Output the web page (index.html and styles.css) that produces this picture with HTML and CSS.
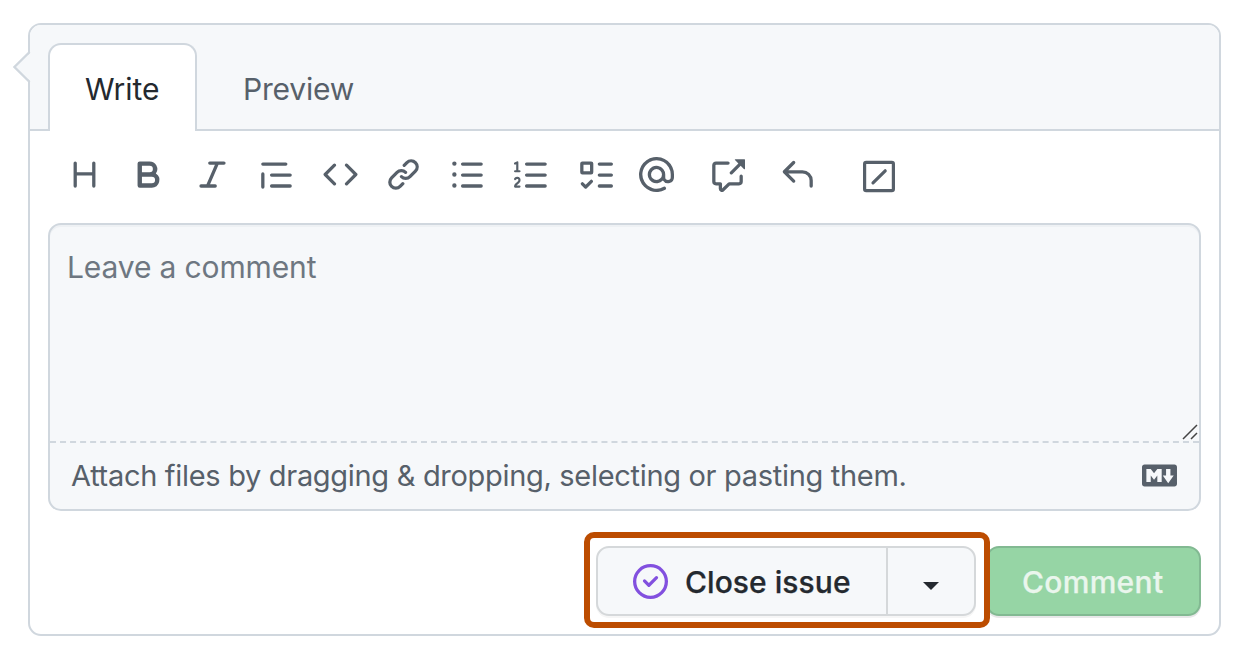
FILE: index.html
```html
<!DOCTYPE html>
<html lang="en">
<head>
<meta charset="utf-8">
<title>Comment</title>
<link rel="stylesheet" href="styles.css">
</head>
<body>
<main class="card">
  <svg class="pointer" viewBox="0 0 18 32"><path class="pointer-fill" d="M18 1 2 16 18 31Z"/><path class="pointer-line" d="M16.6 1 1.4 16 16.6 31"/></svg>
  <nav class="tabs">
    <button class="tab tab-active"><span class="t-write">Write</span></button>
    <button class="tab"><span class="t-preview">Preview</span></button>
  </nav>
  <div class="toolbar">
    <svg class="icon" viewBox="0 0 16 16"><path d="M3.75 2a.75.75 0 0 1 .75.75V7h7V2.75a.75.75 0 0 1 1.5 0v10.5a.75.75 0 0 1-1.5 0V8.5h-7v4.75a.75.75 0 0 1-1.5 0V2.75A.75.75 0 0 1 3.75 2Z"/></svg>
    <svg class="icon" viewBox="0 0 16 16"><path d="M4 2h4.5a3.501 3.501 0 0 1 2.852 5.53A3.499 3.499 0 0 1 9.5 14H4a1 1 0 0 1-1-1V3a1 1 0 0 1 1-1Zm1 7v3h4.5a1.5 1.5 0 0 0 0-3Zm3.5-2a1.5 1.5 0 0 0 0-3H5v3Z"/></svg>
    <svg class="icon" viewBox="0 0 16 16"><path d="M6 2.75A.75.75 0 0 1 6.75 2h6.5a.75.75 0 0 1 0 1.5h-2.505l-3.858 9H9.25a.75.75 0 0 1 0 1.5h-6.5a.75.75 0 0 1 0-1.5h2.505l3.858-9H6.75A.75.75 0 0 1 6 2.75Z"/></svg>
    <svg class="icon" viewBox="0 0 16 16"><path d="M1.75 2.5h10.5a.75.75 0 0 1 0 1.5H1.75a.75.75 0 0 1 0-1.5Zm4 5h8.5a.75.75 0 0 1 0 1.5h-8.5a.75.75 0 0 1 0-1.5Zm0 5h8.5a.75.75 0 0 1 0 1.5h-8.5a.75.75 0 0 1 0-1.5ZM2.5 7.75v6a.75.75 0 0 1-1.5 0v-6a.75.75 0 0 1 1.5 0Z"/></svg>
    <svg class="icon" viewBox="0 0 16 16"><path d="m11.28 3.22 4.25 4.25a.75.75 0 0 1 0 1.06l-4.25 4.25a.749.749 0 0 1-1.275-.326.749.749 0 0 1 .215-.734L13.94 8l-3.72-3.72a.749.749 0 0 1 .326-1.275.749.749 0 0 1 .734.215Zm-6.56 0a.751.751 0 0 1 1.042.018.751.751 0 0 1 .018 1.042L2.06 8l3.72 3.72a.749.749 0 0 1-.326 1.275.749.749 0 0 1-.734-.215L.47 8.53a.75.75 0 0 1 0-1.06Z"/></svg>
    <svg class="icon" viewBox="0 0 16 16"><path d="m7.775 3.275 1.25-1.25a3.5 3.5 0 1 1 4.95 4.95l-2.5 2.5a3.5 3.5 0 0 1-4.95 0 .751.751 0 0 1 .018-1.042.751.751 0 0 1 1.042-.018 1.998 1.998 0 0 0 2.83 0l2.5-2.5a2.002 2.002 0 0 0-2.83-2.83l-1.25 1.25a.751.751 0 0 1-1.042-.018.751.751 0 0 1-.018-1.042Zm-4.69 9.64a1.998 1.998 0 0 0 2.83 0l1.25-1.25a.751.751 0 0 1 1.042.018.751.751 0 0 1 .018 1.042l-1.25 1.25a3.5 3.5 0 1 1-4.95-4.95l2.5-2.5a3.5 3.5 0 0 1 4.95 0 .751.751 0 0 1-.018 1.042.751.751 0 0 1-1.042.018 1.998 1.998 0 0 0-2.83 0l-2.5 2.5a1.998 1.998 0 0 0 0 2.83Z"/></svg>
    <svg class="icon" viewBox="0 0 16 16"><path d="M5.75 2.5h8.5a.75.75 0 0 1 0 1.5h-8.5a.75.75 0 0 1 0-1.5Zm0 5h8.5a.75.75 0 0 1 0 1.5h-8.5a.75.75 0 0 1 0-1.5Zm0 5h8.5a.75.75 0 0 1 0 1.5h-8.5a.75.75 0 0 1 0-1.5ZM2 14a1 1 0 1 1 0-2 1 1 0 0 1 0 2Zm1-6a1 1 0 1 1-2 0 1 1 0 0 1 2 0ZM2 4a1 1 0 1 1 0-2 1 1 0 0 1 0 2Z"/></svg>
    <svg class="icon" viewBox="0 0 16 16"><path d="M5.75 2.5h8.5a.75.75 0 0 1 0 1.5h-8.5a.75.75 0 0 1 0-1.5Zm0 5h8.5a.75.75 0 0 1 0 1.5h-8.5a.75.75 0 0 1 0-1.5Zm0 5h8.5a.75.75 0 0 1 0 1.5h-8.5a.75.75 0 0 1 0-1.5ZM.924 10.32a.5.5 0 0 1-.851-.525l.01-.018c.097-.144.215-.273.348-.384.228-.19.588-.392 1.068-.392.468 0 .858.181 1.126.484.259.294.377.673.377 1.038 0 .987-.686 1.495-1.156 1.845l-.047.035c-.303.225-.522.4-.654.597h1.357a.5.5 0 0 1 0 1H.5a.5.5 0 0 1-.5-.5c0-1.005.692-1.52 1.167-1.875l.035-.025c.531-.396.8-.625.8-1.078a.57.57 0 0 0-.128-.376C1.806 10.068 1.695 10 1.5 10a.658.658 0 0 0-.429.163.835.835 0 0 0-.144.153ZM2.003 2.5V6h.503a.5.5 0 0 1 0 1H.5a.5.5 0 0 1 0-1h.503V3.308l-.28.14a.5.5 0 0 1-.446-.895l1.003-.5a.5.5 0 0 1 .723.447Z"/></svg>
    <svg class="icon" viewBox="0 0 16 16"><path d="M2 2h4a1 1 0 0 1 1 1v4a1 1 0 0 1-1 1H2a1 1 0 0 1-1-1V3a1 1 0 0 1 1-1Zm4.655 8.595a.75.75 0 0 1 0 1.06L4.03 14.28a.75.75 0 0 1-1.06 0l-1.5-1.5a.749.749 0 0 1 .326-1.275.749.749 0 0 1 .734.215l.97.97 2.095-2.095a.75.75 0 0 1 1.06 0ZM9.75 2.5h5.5a.75.75 0 0 1 0 1.5h-5.5a.75.75 0 0 1 0-1.5Zm0 5h5.5a.75.75 0 0 1 0 1.5h-5.5a.75.75 0 0 1 0-1.5Zm0 5h5.5a.75.75 0 0 1 0 1.5h-5.5a.75.75 0 0 1 0-1.5Zm-7.25-9v3h3v-3Z"/></svg>
    <svg class="icon" viewBox="0 0 16 16"><path d="M4.75 2.37a6.501 6.501 0 0 0 6.5 11.26.75.75 0 0 1 .75 1.298A8 8 0 1 1 16 8v1.25a2.75 2.75 0 0 1-5.072 1.475 3.999 3.999 0 0 1-6.65-4.19A4 4 0 0 1 12 8v1.25a1.25 1.25 0 0 0 2.5 0V7.867a6.5 6.5 0 0 0-9.75-5.496ZM10.5 8a2.5 2.5 0 1 0-5 0 2.5 2.5 0 0 0 5 0Z"/></svg>
    <svg class="icon" viewBox="0 0 16 16"><path d="M2.75 3.5a.25.25 0 0 0-.25.25v7.5c0 .138.112.25.25.25h2a.75.75 0 0 1 .75.75v2.19l2.72-2.72a.749.749 0 0 1 .53-.22h4.5a.25.25 0 0 0 .25-.25v-2.5a.75.75 0 0 1 1.5 0v2.5A1.75 1.75 0 0 1 13.25 13H9.06l-2.573 2.573A1.458 1.458 0 0 1 4 14.543V13H2.75A1.75 1.75 0 0 1 1 11.25v-7.5C1 2.784 1.784 2 2.75 2h5.5a.75.75 0 0 1 0 1.5ZM16 1.25v4.146a.25.25 0 0 1-.427.177L14.03 4.03l-3.75 3.75a.749.749 0 0 1-1.275-.326.749.749 0 0 1 .215-.734l3.75-3.75-1.543-1.543A.25.25 0 0 1 11.604 1h4.146a.25.25 0 0 1 .25.25Z"/></svg>
    <svg class="icon" viewBox="0 0 16 16"><path d="M6.78 1.97a.75.75 0 0 1 0 1.06L3.81 6h6.44A4.75 4.75 0 0 1 15 10.75v2.5a.75.75 0 0 1-1.5 0v-2.5a3.25 3.25 0 0 0-3.25-3.25H3.81l2.97 2.97a.749.749 0 0 1-.326 1.275.749.749 0 0 1-.734-.215L1.47 7.28a.75.75 0 0 1 0-1.06l4.25-4.25a.75.75 0 0 1 1.06 0Z"/></svg>
    <svg class="icon icon-slash" viewBox="0 0 36 36"><rect x="3.6" y="3.4" width="28.8" height="28.2" rx="1.6"/><path d="M12 23.9 24.2 11.8"/></svg>
  </div>
  <section class="editor">
    <div class="field">
      <span class="t-placeholder">Leave a comment</span>
      <svg class="grip" viewBox="0 0 16 16"><path d="M1 15 15 1M9 15l6-6"/></svg>
    </div>
    <div class="attach">
      <span class="t-attach">Attach files by dragging &amp; dropping, selecting or pasting them.</span>
      <svg class="icon" viewBox="0 0 16 16"><path d="M14.85 3c.63 0 1.15.52 1.14 1.15v7.7c0 .63-.51 1.15-1.15 1.15H1.15C.52 13 0 12.48 0 11.84V4.15C0 3.52.52 3 1.15 3ZM9 11V5H7L5.5 7 4 5H2v6h2V8l1.5 1.92L7 8v3Zm2.99.5L14.5 8H13V5h-2v3H9.5Z"/></svg>
    </div>
  </section>
  <footer class="actions">
    <div class="highlight">
      <div class="group">
        <button class="close-button">
          <svg class="icon icon-closed" viewBox="0 0 16 16"><path d="M11.28 6.78a.75.75 0 0 0-1.06-1.06L7.25 8.69 5.78 7.22a.75.75 0 0 0-1.06 1.06l2 2a.75.75 0 0 0 1.06 0l3.5-3.5ZM16 8A8 8 0 1 1 0 8a8 8 0 0 1 16 0Zm-1.5 0a6.5 6.5 0 1 0-13 0 6.5 6.5 0 0 0 13 0Z"/></svg>
          <span class="t-close">Close issue</span>
        </button>
        <button class="menu-button"><svg class="caret" viewBox="0 0 16 8"><path d="M0 0h16L8 8Z"/></svg></button>
      </div>
    </div>
    <button class="comment-button"><span class="t-comment">Comment</span></button>
  </footer>
</main>
</body>
</html>
```
FILE: styles.css
```css
* { box-sizing: border-box; }
body { margin: 0; padding: 23px 0 0 28px; height: 650px; overflow: hidden; background: #fff; font: 30px/40px Inter, "Liberation Sans", sans-serif; color: #24292f; }
button { margin: 0; padding: 0; border: 0; background: none; font: inherit; color: inherit; }
span { white-space: nowrap; }
svg { display: block; flex: none; }
.card { position: relative; width: 1193px; height: 613px; border: 2px solid #d0d7de; border-radius: 13px; display: flex; flex-direction: column; }
.pointer { position: absolute; left: -17px; top: 26px; width: 18px; height: 32px; }
.pointer-fill { fill: #f6f8fa; }
.pointer-line { fill: none; stroke: #d0d7de; stroke-width: 2.4; }
.tabs { display: flex; height: 106px; padding: 18px 0 0 18px; background: #f6f8fa; border-bottom: 2px solid #d0d7de; border-radius: 11px 11px 0 0; }
.tab { height: 88px; padding: 3px 45px 0 46px; color: #57606a; text-align: left; }
.tab-active { width: 149px; padding: 1px 0 0 35px; color: #24292f; background: #fff; border: 2px solid #d0d7de; border-bottom: 0; border-radius: 13px 13px 0 0; }
.t-preview { letter-spacing: -.2px; }
.toolbar { display: grid; grid-template-columns: 64px 64px 64px 64px 63px 64px 64px 64px 61px 71px 70px 81px 36px; height: 92px; padding: 26px 0 0 37px; }
.icon { width: 35px; height: 35px; fill: #57606a; }
.icon-slash { width: 36px; height: 36px; margin-top: 2px; fill: none; stroke: #57606a; stroke-width: 3.2; stroke-linecap: round; }
.editor { width: 1153px; height: 288px; margin-left: 18px; border: 2px solid #d0d7de; border-radius: 13px; background: #f6f8fa; box-shadow: inset 0 2px 0 rgba(208, 215, 222, .2); }
.field { display: flex; justify-content: space-between; align-items: flex-end; height: 218px; padding: 0 1px 1px 17px; border-bottom: 2px dashed #d0d7de; color: #6e7781; }
.field span { align-self: flex-start; margin-top: 22px; letter-spacing: -.13px; }
.grip { width: 16px; height: 16px; fill: none; stroke: #444; stroke-width: 1.5; }
.attach { display: flex; justify-content: space-between; align-items: center; height: 66px; padding: 0 22px 0 21px; color: #57606a; font-size: 29px; letter-spacing: -.31px; }
.attach .icon { margin-bottom: 1px; }
.actions { display: flex; justify-content: flex-end; align-items: flex-start; padding: 21px 18px 0 0; font-weight: 500; }
.highlight { position: relative; z-index: 1; width: 406px; height: 96px; padding: 8px 6px; border: 6px solid #bc4c00; border-radius: 10px; background: #fff; }
.group { display: flex; width: 380px; height: 70px; border: 2px solid #d5d8da; border-radius: 13px; background: #f6f8fa; box-shadow: 0 2px 0 rgba(27, 31, 36, .04); }
.close-button { display: flex; align-items: center; gap: 17px; width: 290px; padding-left: 35px; border-right: 2px solid #d5d8da; }
.t-close { padding-top: 2px; letter-spacing: .05px; -webkit-text-stroke: .25px; }
.icon-closed { fill: #8250df; }
.menu-button { flex: 1; display: flex; justify-content: center; padding-top: 34px; }
.caret { width: 16px; height: 8px; fill: #24292f; }
.comment-button { width: 215px; height: 70px; margin: 14px 0 0 -4px; padding: 1px 0 0 34px; text-align: left; border: 2px solid #82b992; border-radius: 13px; background: #96d5a5; color: #eaf6ed; box-shadow: 0 2px 0 rgba(27, 31, 36, .1); letter-spacing: .3px; -webkit-text-stroke: .25px; }
```
